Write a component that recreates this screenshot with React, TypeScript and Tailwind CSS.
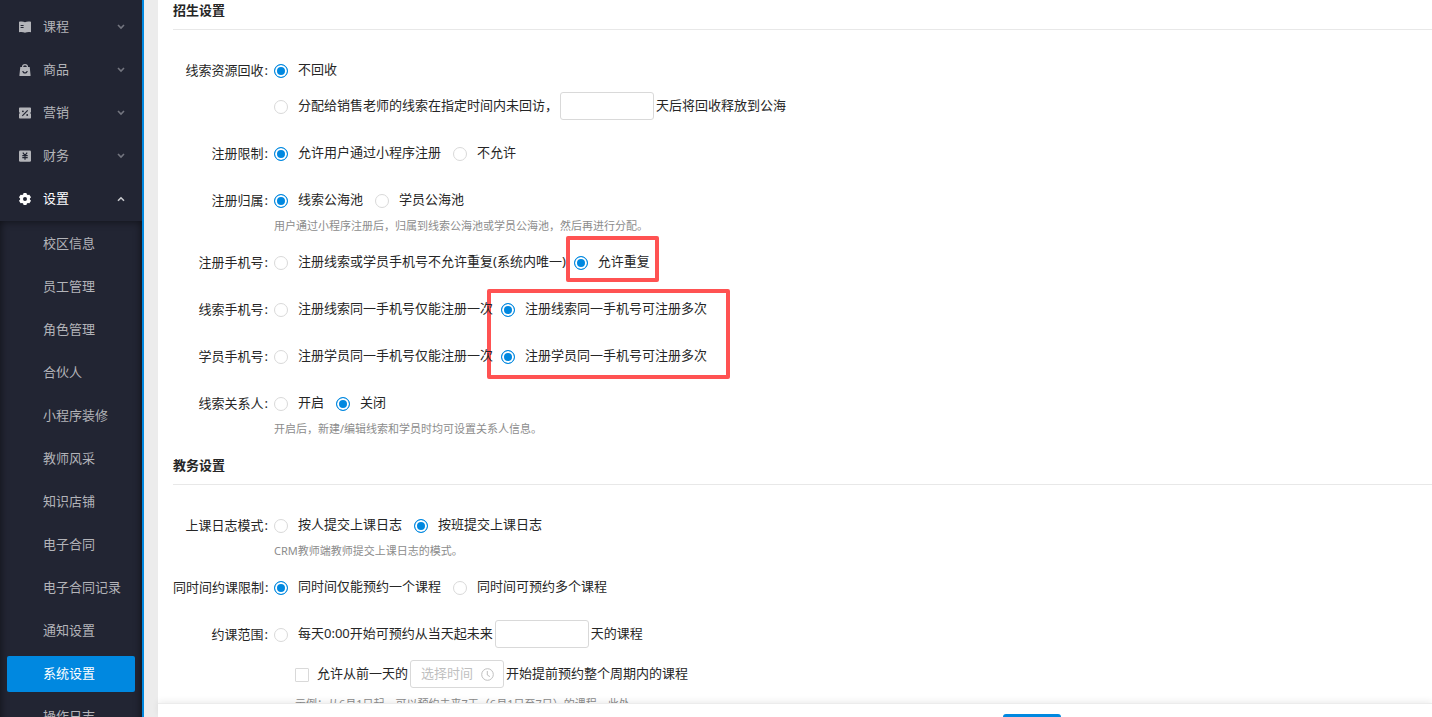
import { useId } from "react";
import type { ReactNode } from "react";

type IconName = "course" | "goods" | "marketing" | "finance" | "settings";

function MenuIcon({ name }: { name: IconName }) {
  return (
    <svg viewBox="0 0 12 12" className="h-3 w-3 shrink-0" fill="currentColor" aria-hidden="true">
      {name === "course" && (
        <path
          fillRule="evenodd"
          d="M0 .8C2.2.2 4.4.3 6 1.2 7.6.3 9.8.2 12 .8v10.4c-2.2-.3-4.4-.2-6 .6-1.6-.8-3.800-.9-6-.6zM1.600 4v1h3V4zM1.600 6v1h3V6z"
        />
      )}
      {name === "goods" && (
        <>
          <path d="M3.600 4V2.700a2.400 2.100 0 0 1 4.800 0V4" fill="none" stroke="currentColor" strokeWidth="1.200" />
          <path
            fillRule="evenodd"
            d="M1.300 3h9.400l.9 8.200a.7.7 0 0 1-.7.800H1.100a.7.7 0 0 1-.7-.8zM3.200 7c.3 1.700 1.400 2.600 2.800 2.600S8.500 8.700 8.800 7H7.600c-.3.900-.8 1.300-1.600 1.300S4.700 7.900 4.400 7z"
          />
        </>
      )}
      {name === "marketing" && (
        <>
          <path d="M.8.500h10.400c.5 0 .8.300.8.800v3.900a.8.8 0 0 0 0 1.600v3.900c0 .5-.3.800-.8.800H.8c-.5 0-.8-.3-.8-.8V6.800a.8.8 0 0 0 0-1.600V1.300C0 .8.300.5.8.5z" />
          <path d="M3.300 8.900l5.400-5.600" stroke="#222533" strokeWidth="1.200" />
          <circle cx="3.900" cy="4.300" r="0.900" fill="#222533" />
          <circle cx="8.200" cy="8" r="0.900" fill="#222533" />
        </>
      )}
      {name === "finance" && (
        <>
          <rect x="0" y="0.500" width="12" height="11.300" rx="1.300" />
          <path
            d="M3.800 2.600L6 5.300l2.200-2.700M3.300 5.600h5.400M3.300 7.600h5.400M6 5.300v4.500"
            fill="none"
            stroke="#222533"
            strokeWidth="1.200"
          />
        </>
      )}
      {name === "settings" && (
        <path
          fillRule="evenodd"
          d="M4.600 0h2.800l.5 1.500 1 .6 1.500-.4L12 4.200 10.900 5.400v1.200L12 7.800l-1.600 2.500-1.500-.4-1 .6L7.400 12H4.600l-.5-1.500-1-.6-1.500.4L0 7.800l1.100-1.200V5.400L0 4.200l1.600-2.500 1.500.4 1-.6zM6 4a2 2 0 1 0 0 4 2 2 0 0 0 0-4z"
        />
      )}
    </svg>
  );
}

function Chevron({ open }: { open: boolean }) {
  return (
    <svg viewBox="0 0 8 6" className="h-[6px] w-2 shrink-0" fill="none" stroke="currentColor" strokeWidth="1.600" aria-hidden="true">
      <path d={open ? "M1 4.800l3-3L7 4.800" : "M1 1l3 3L7 1"} />
    </svg>
  );
}

const MENU: { icon: IconName; label: string; open?: boolean }[] = [
  { icon: "course", label: "课程" },
  { icon: "goods", label: "商品" },
  { icon: "marketing", label: "营销" },
  { icon: "finance", label: "财务" },
  { icon: "settings", label: "设置", open: true },
];

const SUBMENU = [
  "校区信息",
  "员工管理",
  "角色管理",
  "合伙人",
  "小程序装修",
  "教师风采",
  "知识店铺",
  "电子合同",
  "电子合同记录",
  "通知设置",
  "系统设置",
  "操作日志",
];

function Sidebar() {
  return (
    <nav className="flex w-36 shrink-0 flex-col overflow-hidden border-r-2 border-[#0088e0] bg-[#222533] pt-[5px] text-[#b3b4b9]">
      {MENU.map((item) => (
        <button
          key={item.label}
          type="button"
          aria-expanded={!!item.open}
          className={
            item.open
              ? "flex h-[43px] shrink-0 items-center pr-[17px] pl-[19px] text-white"
              : "flex h-[43px] shrink-0 items-center pr-[17px] pl-[19px]"
          }
        >
          <MenuIcon name={item.icon} />
          <span className="ml-3 flex-1 text-left">{item.label}</span>
          <span className={item.open ? "text-[#c8c9cd]" : "text-[#73757f]"}>
            <Chevron open={!!item.open} />
          </span>
        </button>
      ))}
      <ul className="mt-px flex shrink-0 flex-col gap-[7px] px-[7px] pt-[5px] pb-2 shadow-[inset_0_0_8px_rgba(0,0,0,0.6)]">
        {SUBMENU.map((label) => (
          <li key={label}>
            <a
              href="#"
              className={
                label === "系统设置"
                  ? "flex h-9 items-center rounded-xs bg-[#0088e0] pl-9 text-white"
                  : "flex h-9 items-center pl-9"
              }
            >
              {label}
            </a>
          </li>
        ))}
      </ul>
    </nav>
  );
}

function Radio({ name, checked, children }: { name: string; checked?: boolean; children: ReactNode }) {
  return (
    <label className="flex items-center gap-[10px] whitespace-nowrap">
      <input
        type="radio"
        name={name}
        defaultChecked={checked}
        className="mt-0.5 h-[14px] w-[14px] shrink-0 appearance-none rounded-full border border-[#d9d9d9] bg-white checked:border-[#0088e0] checked:bg-[#0088e0] checked:shadow-[inset_0_0_0_2px_#fff]"
      />
      <span>{children}</span>
    </label>
  );
}

function Field({ label, tip, children }: { label: string; tip?: string; children: ReactNode }) {
  const id = useId();
  return (
    <div role="group" aria-labelledby={id} className={tip ? "mb-3 flex items-start" : "mb-[17px] flex items-start"}>
      <div id={id} className="w-[101px] shrink-0 pr-[6px] text-right leading-[28px] whitespace-nowrap">
        {label}
        <span className="ml-px">:</span>
      </div>
      <div className="min-w-0 flex-1">
        {children}
        {tip && <p className="text-[11px] leading-5 whitespace-nowrap text-[#8c8c8c]">{tip}</p>}
      </div>
    </div>
  );
}

function Options({ tight, children }: { tight?: boolean; children: ReactNode }) {
  return (
    <div className={tight ? "flex h-[30px] items-center gap-2 pb-0.5" : "flex h-[30px] items-center gap-3 pb-0.5"}>
      {children}
    </div>
  );
}

function DaysInput({ label }: { label: string }) {
  return (
    <input
      type="text"
      aria-label={label}
      className="h-7 w-[94px] shrink-0 rounded-[3px] border border-[#d9d9d9] bg-white px-2 outline-none"
    />
  );
}

function SectionTitle({ children }: { children: ReactNode }) {
  return (
    <h2 className="mb-[26px] border-b border-[#e8e8e8] pb-2 text-[13px] leading-[21px] font-bold">{children}</h2>
  );
}

export default function App() {
  return (
    <div className="flex h-screen overflow-hidden bg-[#ececec] font-['Noto_Sans','Noto_Sans_CJK_SC',sans-serif] text-[13px] text-[#262626]">
      <Sidebar />
      <div className="ml-[14px] flex min-w-0 flex-1 flex-col bg-white">
        <main className="relative isolate min-h-0 flex-1 overflow-hidden pl-[15px]">
          <SectionTitle>招生设置</SectionTitle>
          <Field label="线索资源回收">
            <Options>
              <Radio name="recycle" checked>
                不回收
              </Radio>
            </Options>
            <div className="mt-[6px] flex h-[30px] items-center gap-0.5 pb-0.5 whitespace-nowrap">
              <Radio name="recycle">分配给销售老师的线索在指定时间内未回访，</Radio>
              <DaysInput label="回收天数" />
              <span>天后将回收释放到公海</span>
            </div>
          </Field>
          <Field label="注册限制">
            <Options>
              <Radio name="limit" checked>
                允许用户通过小程序注册
              </Radio>
              <Radio name="limit">不允许</Radio>
            </Options>
          </Field>
          <Field label="注册归属" tip="用户通过小程序注册后，归属到线索公海池或学员公海池，然后再进行分配。">
            <Options>
              <Radio name="owner" checked>
                线索公海池
              </Radio>
              <Radio name="owner">学员公海池</Radio>
            </Options>
          </Field>
          <Field label="注册手机号">
            <Options tight>
              <Radio name="phone">注册线索或学员手机号不允许重复(系统内唯一)</Radio>
              <Radio name="phone" checked>
                允许重复
              </Radio>
            </Options>
          </Field>
          <Field label="线索手机号">
            <Options tight>
              <Radio name="leadPhone">注册线索同一手机号仅能注册一次</Radio>
              <Radio name="leadPhone" checked>
                注册线索同一手机号可注册多次
              </Radio>
            </Options>
          </Field>
          <Field label="学员手机号">
            <Options tight>
              <Radio name="studentPhone">注册学员同一手机号仅能注册一次</Radio>
              <Radio name="studentPhone" checked>
                注册学员同一手机号可注册多次
              </Radio>
            </Options>
          </Field>
          <Field label="线索关系人" tip="开启后，新建/编辑线索和学员时均可设置关系人信息。">
            <Options>
              <Radio name="relation">开启</Radio>
              <Radio name="relation" checked>
                关闭
              </Radio>
            </Options>
          </Field>

          <div className="mt-4">
            <SectionTitle>教务设置</SectionTitle>
          </div>
          <Field label="上课日志模式" tip="CRM教师端教师提交上课日志的模式。">
            <Options>
              <Radio name="log">按人提交上课日志</Radio>
              <Radio name="log" checked>
                按班提交上课日志
              </Radio>
            </Options>
          </Field>
          <Field label="同时间约课限制">
            <Options>
              <Radio name="booking" checked>
                同时间仅能预约一个课程
              </Radio>
              <Radio name="booking">同时间可预约多个课程</Radio>
            </Options>
          </Field>
          <Field label="约课范围">
            <div className="flex h-[30px] items-center gap-0.5 pb-0.5 whitespace-nowrap">
              <Radio name="range">每天0:00开始可预约从当天起未来</Radio>
              <DaysInput label="预约天数" />
              <span>天的课程</span>
            </div>
            <div className="mt-[10px] ml-[21px] flex h-[30px] items-center gap-0.5 pb-0.5 whitespace-nowrap">
              <label className="flex items-center gap-2">
                <input
                  type="checkbox"
                  className="mt-0.5 h-[14px] w-[14px] shrink-0 appearance-none rounded-[1px] border border-[#d9d9d9] bg-white"
                />
                <span>允许从前一天的</span>
              </label>
              <div className="flex h-7 w-[94px] shrink-0 items-center rounded-[3px] border border-[#d9d9d9] pr-[9px] pl-[10px]">
                <input
                  type="text"
                  aria-label="选择时间"
                  placeholder="选择时间"
                  className="min-w-0 flex-1 bg-transparent outline-none placeholder:text-[#bfbfbf]"
                />
                <svg viewBox="0 0 13 13" className="h-[13px] w-[13px] shrink-0" fill="none" stroke="#bfbfbf" aria-hidden="true">
                  <circle cx="6.500" cy="6.500" r="5.800" />
                  <path d="M6.300 3v4l2.600 1.600" />
                </svg>
              </div>
              <span>开始提前预约整个周期内的课程</span>
            </div>
            <p className="mt-1 ml-[21px] text-[11px] leading-5 whitespace-nowrap text-[#8c8c8c]">
              示例：从6月1日起，可以预约未来7天（6月1日至7日）的课程，此处
            </p>
          </Field>

          <div className="pointer-events-none absolute top-[236px] left-[408px] -z-10 h-[46px] w-[93px] rounded-xs border-4 border-[#ff5252]" />
          <div className="pointer-events-none absolute top-[289px] left-[329px] -z-10 h-[90px] w-[243px] rounded-xs border-4 border-[#ff5252]" />
        </main>
        <footer className="relative flex h-[14px] shrink-0 overflow-visible border-t border-[#ececec] bg-white pt-[10px] shadow-[0_-2px_6px_rgba(0,0,0,0.07)]">
          <div className="flex-[845]" />
          <button type="button" aria-label="保存" className="h-7 w-[58px] shrink-0 rounded-[3px] bg-[#0088e0]" />
          <div className="flex-[371]" />
        </footer>
      </div>
    </div>
  );
}
